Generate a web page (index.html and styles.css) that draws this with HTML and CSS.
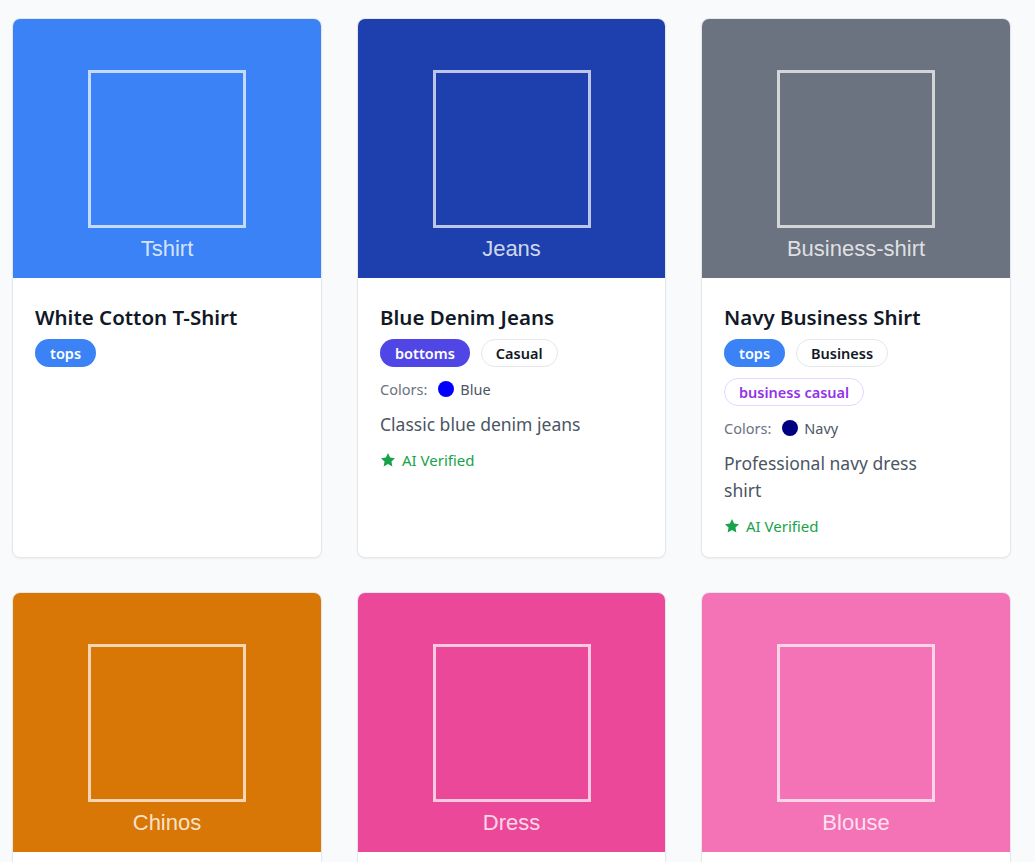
FILE: index.html
```html
<!DOCTYPE html>
<html>
<head>
<meta charset="utf-8">
<link rel="stylesheet" href="styles.css">
</head>
<body>
<div class="grid">
  <div class="card">
    <div class="thumb c-blue"><div class="frame"></div><span class="thumb-label">Tshirt</span></div>
    <div class="body">
      <h3 class="title">White Cotton T-Shirt</h3>
      <div class="tags"><span class="tag tag-tops">tops</span></div>
    </div>
  </div>
  <div class="card">
    <div class="thumb c-navyblue"><div class="frame"></div><span class="thumb-label">Jeans</span></div>
    <div class="body">
      <h3 class="title">Blue Denim Jeans</h3>
      <div class="tags"><span class="tag tag-bottoms">bottoms</span><span class="tag tag-outline">Casual</span></div>
      <div class="colors"><span class="colors-label">Colors:</span><span class="dot dot-blue"></span><span class="color-name">Blue</span></div>
      <p class="desc">Classic blue denim jeans</p>
      <div class="verified"><svg class="star" viewBox="0 0 24 24"><path d="M12 1.5l3.2 6.7 7.3 1-5.3 5.1 1.3 7.3L12 18.1l-6.5 3.5 1.3-7.3-5.3-5.1 7.3-1z"/></svg>AI Verified</div>
    </div>
  </div>
  <div class="card">
    <div class="thumb c-gray"><div class="frame"></div><span class="thumb-label">Business-shirt</span></div>
    <div class="body">
      <h3 class="title">Navy Business Shirt</h3>
      <div class="tags"><span class="tag tag-tops">tops</span><span class="tag tag-outline">Business</span><span class="tag tag-purple">business casual</span></div>
      <div class="colors"><span class="colors-label">Colors:</span><span class="dot dot-navy"></span><span class="color-name">Navy</span></div>
      <p class="desc">Professional navy dress shirt</p>
      <div class="verified"><svg class="star" viewBox="0 0 24 24"><path d="M12 1.5l3.2 6.7 7.3 1-5.3 5.1 1.3 7.3L12 18.1l-6.5 3.5 1.3-7.3-5.3-5.1 7.3-1z"/></svg>AI Verified</div>
    </div>
  </div>
  <div class="card">
    <div class="thumb c-orange"><div class="frame"></div><span class="thumb-label">Chinos</span></div>
    <div class="body"></div>
  </div>
  <div class="card">
    <div class="thumb c-pink"><div class="frame"></div><span class="thumb-label">Dress</span></div>
    <div class="body"></div>
  </div>
  <div class="card">
    <div class="thumb c-lightpink"><div class="frame"></div><span class="thumb-label">Blouse</span></div>
    <div class="body"></div>
  </div>
</div>
</body>
</html>
```

FILE: styles.css
```css
* { box-sizing: border-box; }
html, body { margin: 0; padding: 0; background: #f9fafb; }
body { font-family: "Noto Sans", "Open Sans", sans-serif; color: #111827; }

.grid {
  display: grid;
  grid-template-columns: 310px 309px 310px;
  column-gap: 35px;
  row-gap: 34px;
  padding: 18px 0 0 12px;
}

.card {
  background: #fff;
  border: 1px solid #e5e7eb;
  border-radius: 8px;
  overflow: hidden;
  box-shadow: 0 1px 2px rgba(0,0,0,0.05);
  display: flex;
  flex-direction: column;
  min-height: 540px;
}

.thumb {
  height: 259px;
  display: flex;
  flex-direction: column;
  align-items: center;
  flex-shrink: 0;
}
.frame {
  width: 158px;
  height: 158px;
  border: 3px solid rgba(255,255,255,0.7);
  margin-top: 51px;
}
.thumb-label {
  font-family: "Liberation Sans", Arial, sans-serif;
  font-size: 22px;
  line-height: 24px;
  color: rgba(255,255,255,0.8);
  margin-top: 9px;
}
.c-blue { background: #3b82f6; }
.c-navyblue { background: #1e40af; }
.c-gray { background: #6b7280; }
.c-orange { background: #d97706; }
.c-pink { background: #ec4899; }
.c-lightpink { background: #f472b6; }

.body { padding: 25px 22px 21px 22px; }

.title {
  margin: 0 0 8px;
  font-size: 20.5px;
  line-height: 28px;
  font-weight: 600;
  color: #111827;
}

.tags { display: flex; flex-wrap: wrap; gap: 11px 11px; }
.tag {
  display: inline-flex;
  align-items: center;
  height: 28px;
  padding: 0 14px;
  border-radius: 14px;
  font-size: 14.5px;
  font-weight: 600;
  border: 1px solid transparent;
}
.tag-tops { background: #3b82f6; color: #fff; }
.tag-bottoms { background: #4f46e5; color: #fff; }
.tag-outline { background: #fff; color: #111827; border-color: #e5e7eb; }
.tag-purple { background: #fff; color: #9333ea; border-color: #e9d5ff; }

.colors {
  display: flex;
  align-items: center;
  margin-top: 12px;
  height: 20px;
  font-size: 14.5px;
}
.colors-label { color: #6b7280; margin-right: 11px; }
.dot { width: 16px; height: 16px; border-radius: 50%; margin-right: 6px; }
.dot-blue { background: #0000ff; }
.dot-navy { background: #000080; }
.color-name { color: #4b5563; }

.desc {
  margin: 12px 0 0;
  font-size: 17.5px;
  line-height: 27px;
  color: #4b5563;
  max-width: 220px;
}

.verified {
  display: flex;
  align-items: center;
  margin-top: 12px;
  height: 20px;
  font-size: 15px;
  color: #16a34a;
}
.star { width: 16px; height: 16px; fill: #16a34a; margin-right: 6px; }
```
